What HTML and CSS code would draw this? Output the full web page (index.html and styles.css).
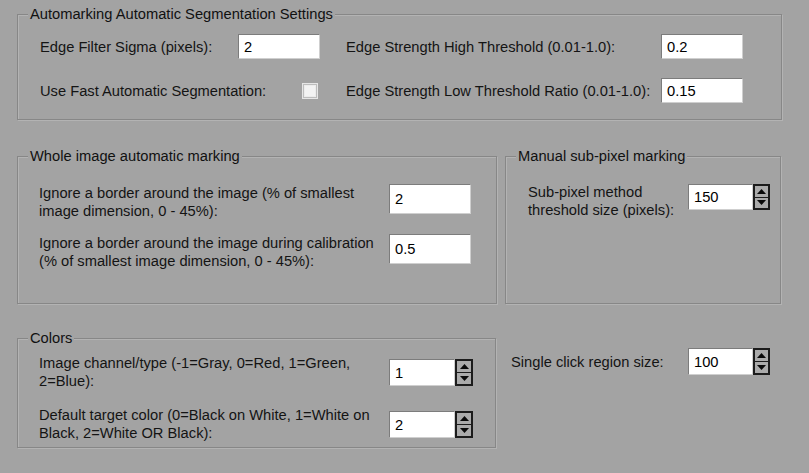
FILE: index.html
```html
<!DOCTYPE html>
<html>
<head>
<meta charset="utf-8">
<link rel="stylesheet" href="styles.css">
</head>
<body>
<div class="page">
  <fieldset class="group g-auto">
    <legend>Automarking Automatic Segmentation Settings</legend>
    <div class="auto-grid">
      <span class="lbl">Edge Filter Sigma (pixels):</span>
      <span class="field h25">2</span>
      <span class="lbl">Edge Strength High Threshold (0.01-1.0):</span>
      <span class="field h25">0.2</span>
      <span class="lbl">Use Fast Automatic Segmentation:</span>
      <span class="check"></span>
      <span class="lbl">Edge Strength Low Threshold Ratio (0.01-1.0):</span>
      <span class="field h25">0.15</span>
    </div>
  </fieldset>

  <div class="row mid">
    <fieldset class="group g-whole">
      <legend>Whole image automatic marking</legend>
      <div class="whole-grid">
        <span class="lbl2">Ignore a border around the image (% of smallest<br>image dimension, 0 - 45%):</span>
        <span class="field h30">2</span>
        <span class="lbl2">Ignore a border around the image during calibration<br>(% of smallest image dimension, 0 - 45%):</span>
        <span class="field h30">0.5</span>
      </div>
    </fieldset>
    <fieldset class="group g-manual">
      <legend>Manual sub-pixel marking</legend>
      <div class="manual-grid">
        <span class="lbl2">Sub-pixel method<br>threshold size (pixels):</span>
        <span class="spinbox h26">
          <span class="field">150</span>
          <span class="spin">
            <span class="spin-btn"><svg width="9" height="5" viewBox="0 0 9 5"><path d="M0 5 L4.5 0 L9 5 Z"/></svg></span>
            <span class="spin-btn"><svg width="9" height="5" viewBox="0 0 9 5"><path d="M0 0 L9 0 L4.5 5 Z"/></svg></span>
          </span>
        </span>
      </div>
    </fieldset>
  </div>

  <div class="row bottom">
    <fieldset class="group g-colors">
      <legend>Colors</legend>
      <div class="colors-grid">
        <span class="lbl2">Image channel/type (-1=Gray, 0=Red, 1=Green,<br>2=Blue):</span>
        <span class="spinbox h27 wide">
          <span class="field">1</span>
          <span class="spin">
            <span class="spin-btn"><svg width="9" height="5" viewBox="0 0 9 5"><path d="M0 5 L4.5 0 L9 5 Z"/></svg></span>
            <span class="spin-btn"><svg width="9" height="5" viewBox="0 0 9 5"><path d="M0 0 L9 0 L4.5 5 Z"/></svg></span>
          </span>
        </span>
        <span class="lbl2">Default target color (0=Black on White, 1=White on<br>Black, 2=White OR Black):</span>
        <span class="spinbox h27 wide">
          <span class="field">2</span>
          <span class="spin">
            <span class="spin-btn"><svg width="9" height="5" viewBox="0 0 9 5"><path d="M0 5 L4.5 0 L9 5 Z"/></svg></span>
            <span class="spin-btn"><svg width="9" height="5" viewBox="0 0 9 5"><path d="M0 0 L9 0 L4.5 5 Z"/></svg></span>
          </span>
        </span>
      </div>
    </fieldset>
    <div class="single">
      <span class="single-lbl">Single click region size:</span>
      <span class="spinbox h27">
        <span class="field">100</span>
        <span class="spin">
          <span class="spin-btn"><svg width="9" height="5" viewBox="0 0 9 5"><path d="M0 5 L4.5 0 L9 5 Z"/></svg></span>
          <span class="spin-btn"><svg width="9" height="5" viewBox="0 0 9 5"><path d="M0 0 L9 0 L4.5 5 Z"/></svg></span>
        </span>
      </span>
    </div>
  </div>
</div>
</body>
</html>
```

FILE: styles.css
```css
html, body {
  margin: 0;
  padding: 0;
  background: #a3a3a3;
}

body {
  width: 809px;
  height: 473px;
  overflow: hidden;
  font-family: "Liberation Sans", Arial, sans-serif;
  font-size: 14.7px;
  color: #141414;
}

.page {
  padding: 6px 27px 0 17px;
}

.group {
  margin: 0;
  padding: 0;
  min-width: 0;
  border: 1px solid #878787;
  box-shadow: 1px 1px 0 #b3b3b3, inset 1px 1px 0 #b3b3b3;
}

.group legend {
  margin-left: 10px;
  padding: 0 2px;
  line-height: 16px;
  height: 16px;
  background: #a3a3a3;
  color: #111;
  white-space: nowrap;
}

.lbl, .lbl2, .single-lbl {
  white-space: nowrap;
}

.lbl2 {
  line-height: 18px;
}

/* Group 1 */
.auto-grid {
  display: grid;
  grid-template-columns: 198px 108px 315px 82px;
  grid-auto-rows: 25px;
  row-gap: 19px;
  align-items: center;
  padding: 12px 0 16px 22px;
}

.field {
  display: flex;
  align-items: center;
  box-sizing: border-box;
  width: 82px;
  padding: 0 5px;
  background: #ffffff;
  border: 1px solid;
  border-color: #7c7c7c #cfcfcf #cfcfcf #7c7c7c;
  color: #000;
  white-space: nowrap;
}

.h25 { height: 25px; }
.h30 { height: 30px; }

.check {
  box-sizing: border-box;
  width: 16px;
  height: 16px;
  margin-left: 64px;
  background: #f3f3f3;
  border: 1px solid #e6e6e6;
  box-shadow: inset 0 0 0 1px #bdbdbd, inset 0 0 0 2px #ececec;
}

/* Middle row */
.row {
  display: flex;
  align-items: stretch;
}

.mid {
  margin-top: 28px;
}

.g-whole {
  width: 480px;
  box-sizing: border-box;
}

.whole-grid {
  display: grid;
  grid-template-columns: 350px 82px;
  row-gap: 14px;
  align-items: start;
  padding: 20px 0 33px 21px;
}

.g-manual {
  flex: 1;
  margin-left: 8px;
  margin-right: 1px;
}

.manual-grid {
  display: grid;
  grid-template-columns: 160px auto;
  align-items: start;
  padding: 19px 0 0 22px;
}

.manual-grid .spinbox {
  margin-top: 1px;
}

/* Spin boxes */
.spinbox {
  display: flex;
}

.spinbox .field {
  width: 65px;
  height: 100%;
}

.spinbox.wide .field {
  width: 66px;
}

.h26 { height: 26px; }
.h27 { height: 27px; }

.spin {
  display: flex;
  flex-direction: column;
  box-sizing: border-box;
  width: 17px;
  height: 100%;
  padding: 1px;
  gap: 1px;
  background: #7a7a7a;
  border: 1px solid #1c1c1c;
}

.spinbox.wide .spin {
  width: 18px;
}

.spin-btn {
  flex: 1;
  display: flex;
  align-items: center;
  justify-content: center;
  background: #ababab;
  border: 1px solid #1c1c1c;
  margin: -1px;
}

.spin-btn svg {
  display: block;
  fill: #0a0a0a;
}

/* Bottom row */
.bottom {
  margin-top: 26px;
  align-items: flex-start;
}

.g-colors {
  width: 479px;
  box-sizing: border-box;
}

.colors-grid {
  display: grid;
  grid-template-columns: 350px auto;
  row-gap: 16px;
  align-items: start;
  padding: 8px 0 5px 21px;
}

.colors-grid .spinbox {
  margin-top: 5px;
}

.single {
  display: flex;
  align-items: center;
  margin-top: 18px;
  padding-left: 15px;
}

.single-lbl {
  width: 177px;
}
```
